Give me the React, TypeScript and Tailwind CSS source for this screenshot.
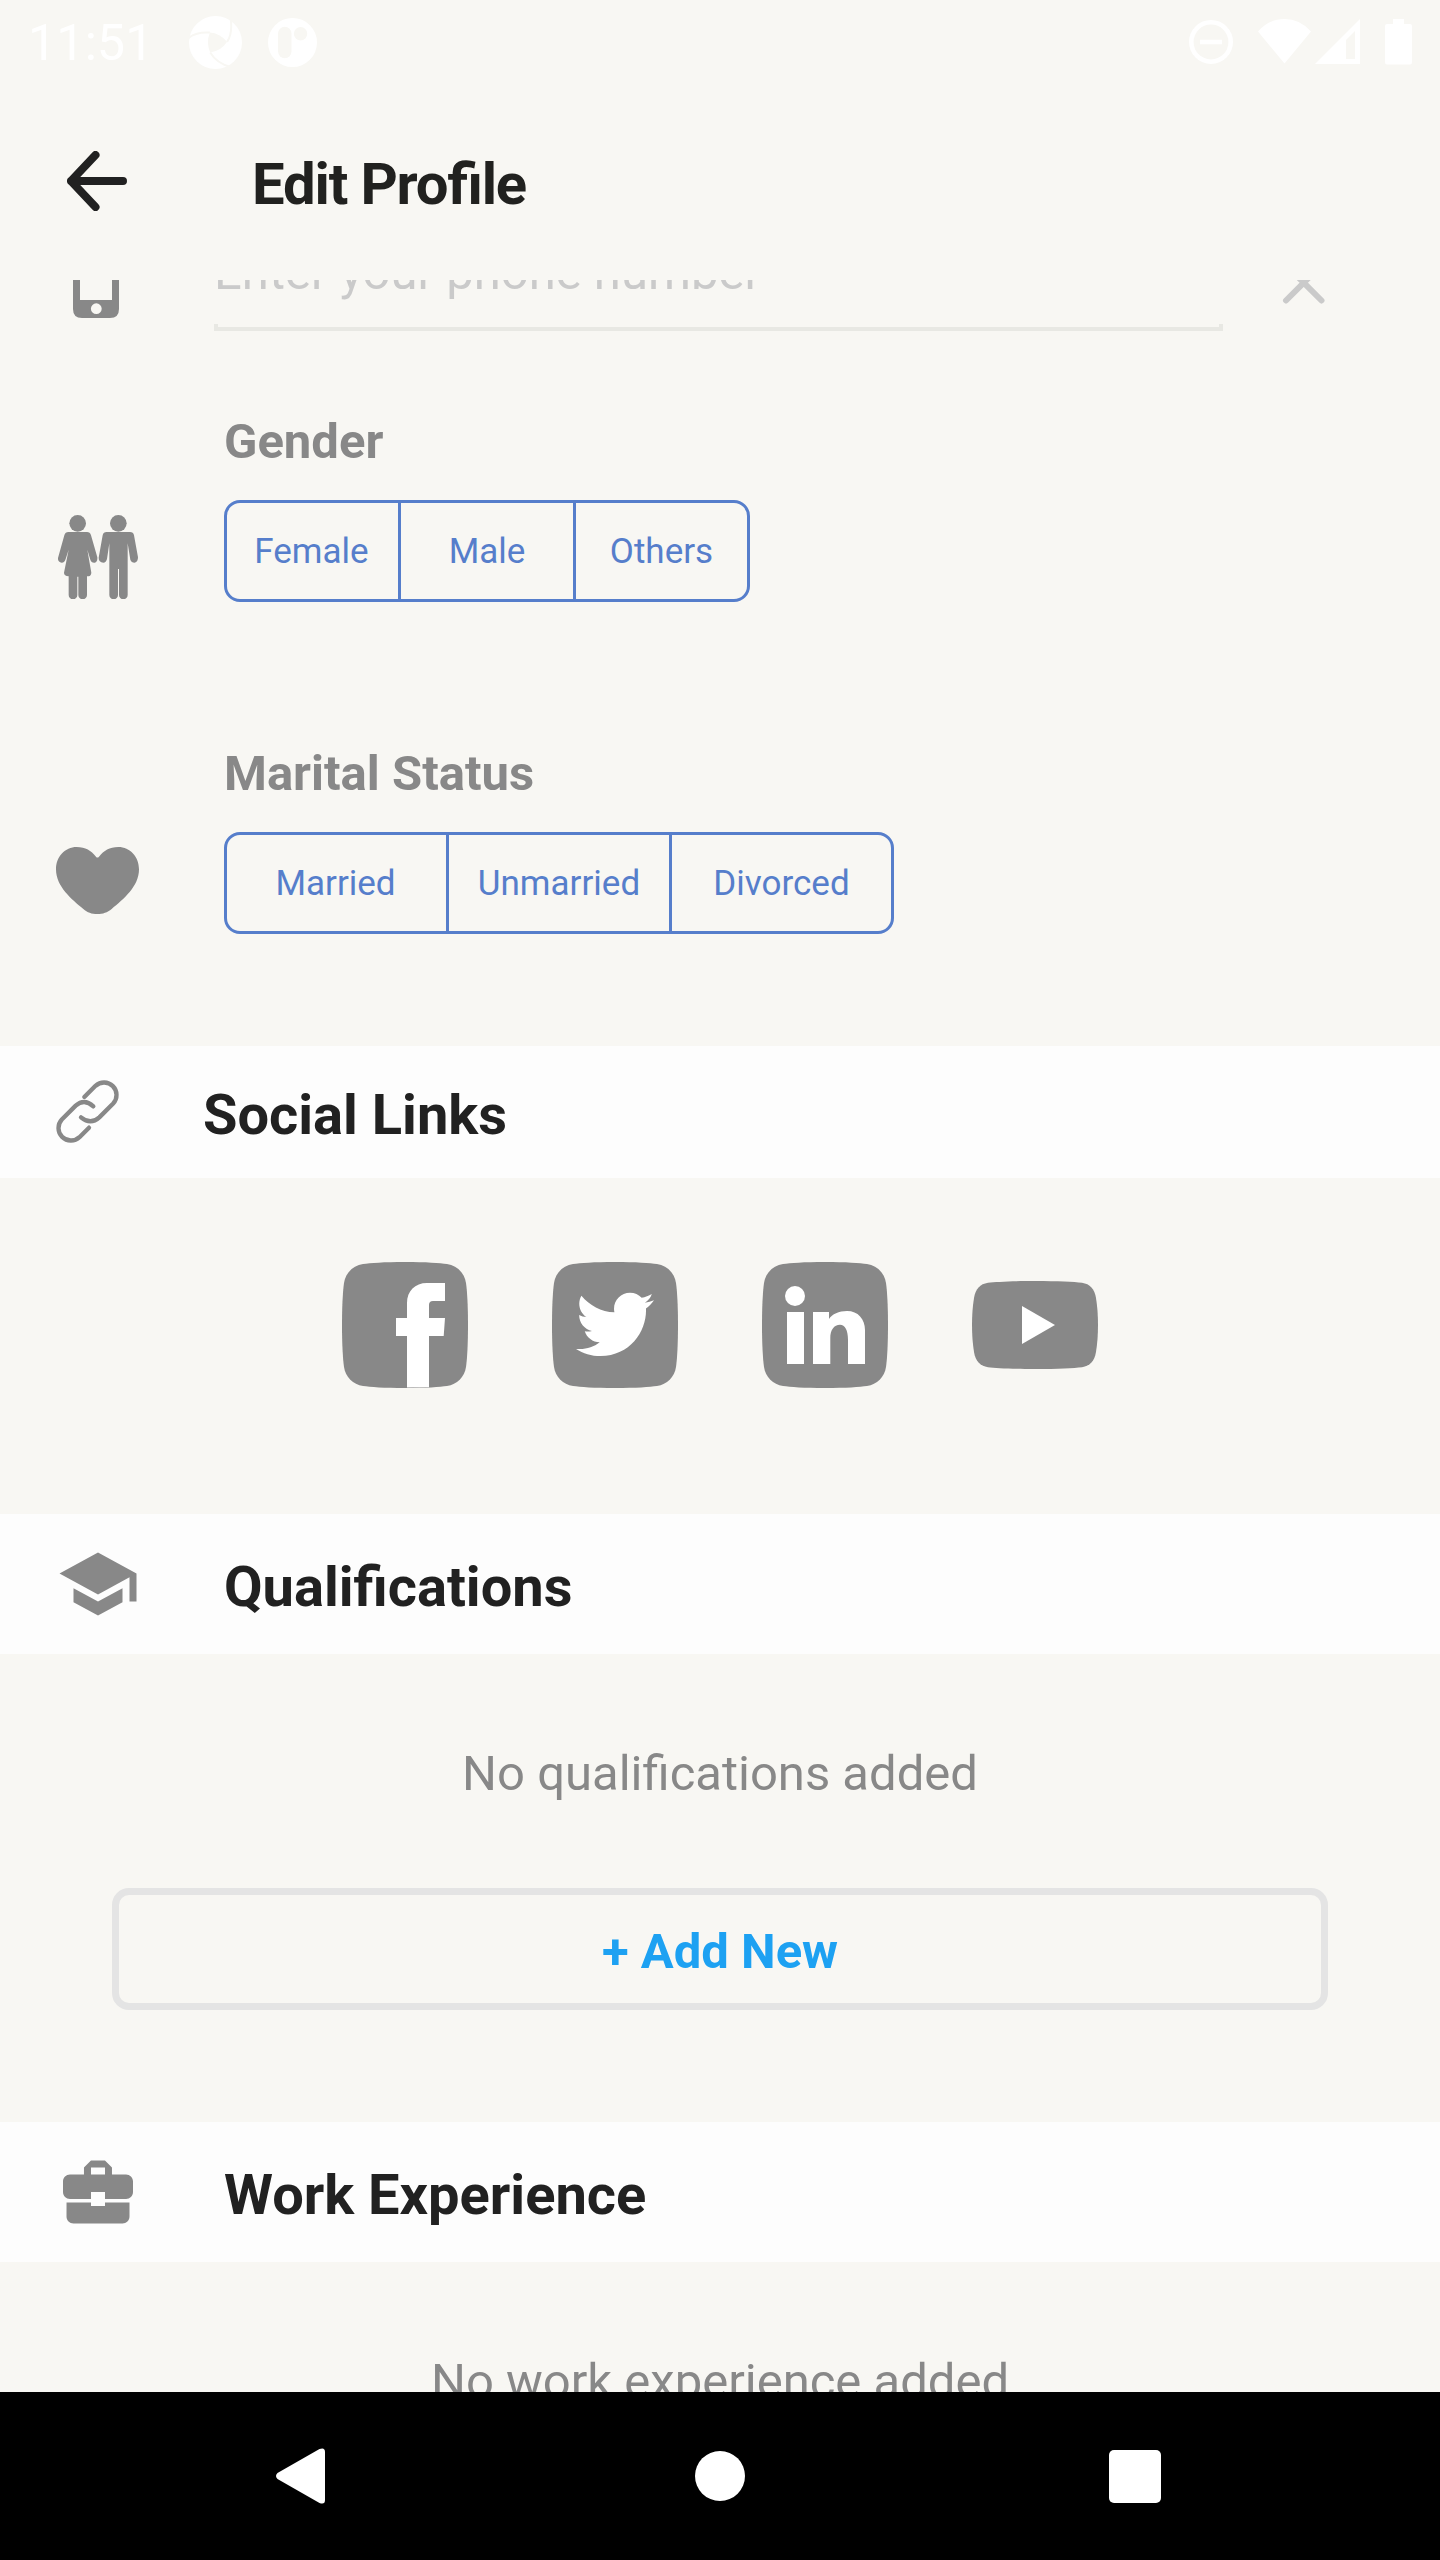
import type { ReactNode } from 'react';
import { FaTwitter } from 'react-icons/fa';
import { MdBusinessCenter, MdSchool } from 'react-icons/md';

function StatusBar() {
  return (
    <div className="flex h-[82px] shrink-0 items-start text-white">
      <span className="mt-[14px] ml-[28px] w-[161px] text-[50.4px] leading-[58px]">11:51</span>
      <svg className="mt-[16px] h-[53px] w-[53px]" viewBox="566 47 160 160">
        <circle cx="646" cy="127" r="80" fill="#fff" />
        <path d="M629 97Q659 99 681 125Q663 153 630 157Q617 128 629 97Z" fill="#f8f7f3" />
        <path
          d="M562 116Q585 94 629 97M692 55Q698 100 681 125M630 157Q650 190 692 201"
          fill="none"
          stroke="#f8f7f3"
          strokeWidth="6"
        />
      </svg>
      <svg className="mt-[18px] ml-[26px] h-[49px] w-[49px]" viewBox="804 54 146 146">
        <circle cx="877" cy="127" r="73" fill="#fff" />
        <rect x="834" y="80" width="40" height="94" rx="20" fill="#f8f7f3" />
        <circle cx="901" cy="101" r="20" fill="#f8f7f3" />
      </svg>
      <svg className="mt-[20px] ml-auto h-[44px] w-[44px]" viewBox="0 0 44 44" fill="none" stroke="#fff">
        <circle cx="22" cy="22" r="19.7" strokeWidth="4.6" />
        <path d="M11 22H33" strokeWidth="4.6" />
      </svg>
      <svg className="mt-[19px] ml-[25px] h-[45px] w-[53px]" viewBox="0 0 53 45" fill="#fff">
        <path d="M0 12.5Q11 0 26.500 0T53 12.500L26.500 44.500Z" />
      </svg>
      <svg className="mt-[19px] ml-[4px] h-[45px] w-[45px]" viewBox="0 0 45 45" fill="#fff" fillRule="evenodd">
        <path d="M45 0V45H0ZM40 12L31 21V40H40Z" />
      </svg>
      <svg className="mt-[19px] mr-[28px] ml-[25px] h-[46px] w-[27px]" viewBox="0 0 27 46" fill="#fff">
        <path d="M8 0H19V5H25Q27 5 27 7V43Q27 45.500 25 45.500H2Q0 45.500 0 43V7Q0 5 2 5H8Z" />
      </svg>
    </div>
  );
}

function Header() {
  return (
    <header className="flex h-[198px] shrink-0 items-center">
      <svg className="ml-[67px] h-[60px] w-[60px]" viewBox="0 0 60 60" fill="none" stroke="#212121" strokeWidth="8" strokeLinecap="round" strokeLinejoin="round">
        <path d="M28.500 4L4 30L28.500 56M4 30H56" />
      </svg>
      <h1 className="ml-[125px] pt-[6px] text-[58px] leading-[60px] font-bold tracking-[-1.15px] text-[#21211f] [font-feature-settings:'liga'_1]">
        Edit Profile
      </h1>
    </header>
  );
}

function PhoneField() {
  return (
    <div className="-mt-[79px] flex h-[130px] shrink-0 items-end">
      <svg className="mb-[13px] ml-[73px] h-[78px] w-[46px]" viewBox="0 0 46 78" fill="#888" fillRule="evenodd">
        <path d="M9 0H37Q46 0 46 9V69Q46 78 37 78H9Q0 78 0 69V9Q0 0 9 0ZM7 10V60H39V10ZM23.300 63.300A5.400 5.400 0 1 0 23.300 74.100A5.400 5.400 0 1 0 23.300 63.300Z" />
      </svg>
      <div className="relative ml-[95px] flex h-[118px] w-[1009px] items-center border-b-4 border-[#e8e8e3] pt-[6px]">
        <span className="text-[49px] leading-[58px] text-[#cacaca]">Enter your phone number</span>
        <span className="absolute bottom-0 left-0 h-[3px] w-[4px] bg-[#e8e8e3]" />
        <span className="absolute right-0 bottom-0 h-[3px] w-[4px] bg-[#e8e8e3]" />
      </div>
      <svg className="mb-[26px] ml-[59px] h-[44px] w-[44px]" viewBox="0 0 44 44" stroke="#cacaca" strokeWidth="6" strokeLinecap="round">
        <path d="M4 4L39.500 39.500M39.500 4L4 39.500" />
      </svg>
    </div>
  );
}

function ChoiceField({ icon, label, options, columns }: { icon: ReactNode; label: string; options: string[]; columns: string }) {
  return (
    <div className="flex h-[190px] shrink-0 items-end">
      <div className="w-[224px] shrink-0">{icon}</div>
      <div className="flex flex-col">
        <h3 className="mb-[29px] text-[49px] leading-[58px] font-bold text-[#888]">{label}</h3>
        <div className={`grid h-[102px] overflow-hidden rounded-[16px] border-[3px] border-[#567ecb] ${columns}`}>
          {options.map((option) => (
            <button
              key={option}
              className="flex items-center justify-center border-l-[3px] border-[#567ecb] pt-[2px] text-[35px] text-[#567ecb] first:border-l-0 first:pr-[2px]"
            >
              {option}
            </button>
          ))}
        </div>
      </div>
    </div>
  );
}

const genderIcon = (
  <svg className="mb-[3px] ml-[58px] h-[84px] w-[80px]" viewBox="174 345 240 252" fill="#888">
    <circle cx="233" cy="370" r="25" />
    <circle cx="355" cy="370" r="25" />
    <path d="M205 396H261Q270 396 273 406L292 472Q293 486 284 488Q274 489 271 479L262 449L274 518Q273 528 266 529H261V585A13 13 0 0 1 235 585V530H232V585A13 13 0 0 1 206 585V529Q192 528 192 518L206 449L197 477Q194 488 185 488Q173 486 174 474L193 406Q196 396 205 396Z" />
    <path d="M320 396H390Q400 396 402 406L414 472Q414 486 404 488Q394 488 391 479L383 430V585A13 13 0 0 1 357 585V507H354V585A13 13 0 0 1 328 585V430L321 477Q318 488 310 488Q296 487 296 473L308 406Q310 396 320 396Z" />
  </svg>
);

const heartIcon = (
  <svg className="mb-[20px] ml-[56px] h-[67px] w-[83px]" viewBox="168 321 249 201" fill="#888">
    <path d="M297 350C312 332 328 321 355 321C390 321 417 350 417 388C417 440 370 478 335 507C322 518 309 522 292 522C275 522 262 518 250 507C215 478 168 440 168 388C168 350 195 321 230 321C257 321 273 332 288 350Q292 355 297 350Z" />
  </svg>
);

const linkIcon = (
  <svg className="mb-px ml-[56px] h-[63px] w-[63px]" viewBox="168 1020 189 189" fill="none" stroke="#888" strokeWidth="13" strokeLinecap="round">
    <path d="M253 1071L286.500 1037.500A37.500 37.500 0 0 1 339.500 1090.500L298 1132Q272 1156 243 1132" />
    <path d="M267 1163L238.500 1191.500A37.500 37.500 0 0 1 185.500 1138.500L227 1097Q253 1074 280 1099" />
  </svg>
);

function SectionBar({ icon, title, className }: { icon: ReactNode; title: string; className: string }) {
  return (
    <div className={`flex shrink-0 items-center bg-[#fdfdfd] ${className}`}>
      {icon}
      <h2 className="pt-[6px] text-[56px] leading-[60px] font-bold text-[#212121]">{title}</h2>
    </div>
  );
}

function Tile({ children }: { children: ReactNode }) {
  return (
    <svg className="h-[126px] w-[126px]" viewBox="0 0 126 126">
      <path
        fill="#888"
        d="M63 0C84 0 98 1 105 2C115 3.500 122.500 11 124 21C125 28 126 42 126 63C126 84 125 98 124 105C122.500 115 115 122.500 105 124C98 125 84 126 63 126C42 126 28 125 21 124C11 122.500 3.500 115 2 105C1 98 0 84 0 63C0 42 1 28 2 21C3.500 11 11 3.500 21 2C28 1 42 0 63 0Z"
      />
      {children}
    </svg>
  );
}

function SocialLinks() {
  return (
    <div className="flex h-[336px] shrink-0 justify-center gap-[84px] pt-[84px]">
      <Tile>
        <path fill="#fff" d="M65 125.500V74H54V56H65V41C65 29 73 21 85 21H103V39H91Q87 39 87 43V56H103L101.700 74H87V125.300Z" />
      </Tile>
      <Tile>
        <FaTwitter x="24" y="23.400" size={78} fill="#fff" />
      </Tile>
      <Tile>
        <circle cx="33" cy="34" r="10" fill="#fff" />
        <path fill="#fff" d="M25 50H42V102H25ZM51 50H67V57C70 52 77 49 85 49C96 49 103 57 103 68V102H86V78C86 68 83 62.700 78 62.700C72 62.700 68.300 68 68.300 76V102H51Z" />
      </Tile>
      <svg className="mt-[19px] h-[88px] w-[126px]" viewBox="0 0 126 88">
        <path
          fill="#888"
          d="M63 0C86 0 102 .8 110 1.800C118 3 122.500 8 124 17C125.300 25 126 34 126 44C126 54 125.300 63 124 71C122.500 80 118 85 110 86.200C102 87.200 86 88 63 88C40 88 24 87.200 16 86.200C8 85 3.500 80 2 71C.7 63 0 54 0 44C0 34 .7 25 2 17C3.500 8 8 3 16 1.800C24 .8 40 0 63 0Z"
        />
        <path fill="#fff" d="M50 25L83 44L50 63Z" />
      </svg>
    </div>
  );
}

function NavBar() {
  return (
    <nav className="flex h-[168px] shrink-0 items-center bg-black">
      <svg className="ml-[276px] h-[56px] w-[49px]" viewBox="0 0 49 56" fill="#fff">
        <path d="M1.500 25L43.500 1Q49 -1 49 4V52Q49 57 43.500 55L1.500 31Q-1.500 28 1.500 25Z" />
      </svg>
      <span className="ml-[370px] h-[50px] w-[50px] rounded-full bg-white" />
      <span className="ml-[364px] h-[53px] w-[52px] rounded-[5px] bg-white" />
    </nav>
  );
}

export default function App() {
  return (
    <div className="flex h-[2560px] w-[1440px] flex-col overflow-hidden bg-[#f8f7f3] font-[Roboto,sans-serif]">
      <StatusBar />
      <Header />
      <main className="flex h-[2112px] shrink-0 flex-col overflow-hidden">
        <PhoneField />
        <div className="flex shrink-0 flex-col gap-[142px] pt-[81px] pb-[112px]">
          <ChoiceField icon={genderIcon} label="Gender" options={['Female', 'Male', 'Others']} columns="w-[526px] grid-cols-[171px_175px_1fr]" />
          <ChoiceField icon={heartIcon} label="Marital Status" options={['Married', 'Unmarried', 'Divorced']} columns="w-[670px] grid-cols-[219px_223px_1fr]" />
        </div>
        <SectionBar className="h-[132px] gap-[84px]" icon={linkIcon} title="Social Links" />
        <SocialLinks />
        <SectionBar className="h-[140px] gap-[84px]" icon={<MdSchool className="ml-[56px] h-[84px] w-[84px] text-[#888]" />} title="Qualifications" />
        <div className="flex h-[468px] shrink-0 flex-col items-center pt-[91px]">
          <p className="text-[49px] leading-[58px] text-[#888]">No qualifications added</p>
          <button className="mt-[85px] h-[122px] w-[1216px] rounded-[17px] border-[7px] border-[#e4e4e4] pt-[6px] text-[49px] leading-[58px] font-bold text-[#1da1f2]">
            + Add New
          </button>
        </div>
        <SectionBar className="h-[140px] gap-[84px]" icon={<MdBusinessCenter className="ml-[56px] h-[84px] w-[84px] text-[#888]" />} title="Work Experience" />
        <p className="shrink-0 pt-[91px] text-center text-[49px] leading-[58px] text-[#888]">No work experience added</p>
      </main>
      <NavBar />
    </div>
  );
}
